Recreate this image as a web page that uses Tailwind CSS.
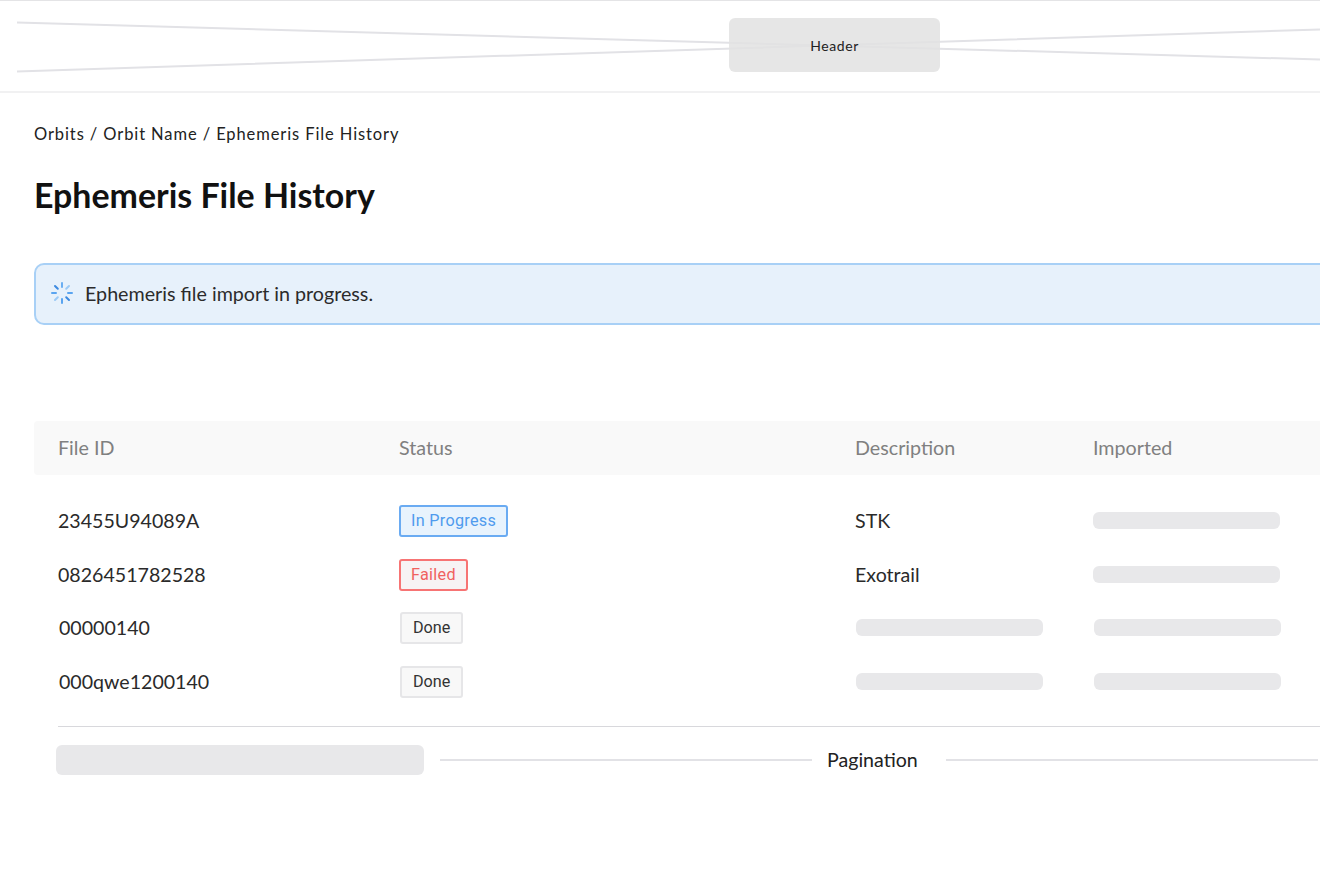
<!DOCTYPE html>
<html lang="en">

<head>
    <meta charset="UTF-8">
    <meta name="viewport" content="width=device-width, initial-scale=1.0">
    <title>Ephemeris File History</title>
    <script src="https://cdn.jsdelivr.net/npm/@tailwindcss/browser@4"></script>
</head>

<body class="bg-white overflow-hidden h-[880px] font-['Lato','Liberation_Sans',sans-serif] text-[#1a1a1a]">

    <!-- header placeholder -->
    <header class="relative h-[93px] border-t border-t-[#e4e4e6] border-b-2 border-b-[#f1f1f2] flex justify-center">
        <svg class="absolute inset-0" width="1320" height="92" viewBox="0 0 1320 92" fill="none">
            <path d="M17 21.5L1320 58.5M17 70.5L1320 28.5" stroke="#e2e2e6" stroke-width="2" />
        </svg>
        <div class="relative w-[211px] h-[54px] mt-[17px] ml-[349px] rounded-[6px] bg-[#e2e2e2]/85 flex items-center justify-center text-[14px] tracking-[0.6px] text-[#222]">Header</div>
    </header>

    <main class="pl-[34px] w-[1400px]">
        <div class="mt-[31px] text-[16.5px] leading-[20px] tracking-[0.9px] text-[#222]">Orbits / Orbit Name / Ephemeris File History</div>
        <h1 class="mt-[31px] text-[33.9px] leading-[40px] font-bold text-[#111]">Ephemeris File History</h1>

        <!-- alert -->
        <div class="mt-[48px] h-[62px] border-2 border-[#a8d0f6] rounded-[10px] bg-[#e7f1fb] flex items-center pl-[14px] gap-[11px] text-[19.7px] text-[#2b2b2b]">
            <svg class="-mt-[2px]" width="24" height="24" viewBox="0 0 24 24" fill="none" stroke-width="2" stroke-linecap="round">
                <path d="M12 2V6" stroke="#6aaef2" />
                <path d="M19 5L16.2 7.8" stroke="#9ccaf6" />
                <path d="M22 12H18" stroke="#5aa4f0" />
                <path d="M19 19L16.2 16.2" stroke="#3d8ae0" />
                <path d="M12 22V18" stroke="#5aa4f0" />
                <path d="M5 19L7.8 16.2" stroke="#9ccaf6" />
                <path d="M2 12H6" stroke="#5aa4f0" />
                <path d="M5 5L7.8 7.8" stroke="#3d8ae0" />
            </svg>
            <span>Ephemeris file import in progress.</span>
        </div>

        <!-- table -->
        <div class="mt-[96px]">
            <div class="h-[54px] pb-[1px] bg-[#f9f9f9] rounded-[4px] pl-[24px] grid grid-cols-[341px_456px_238px_1fr] items-center text-[19.7px] text-[#808080]">
                <div>File ID</div>
                <div>Status</div>
                <div>Description</div>
                <div>Imported</div>
            </div>

            <div class="pt-[19px] text-[19.6px] text-[#2a2a2a]">
                <div class="pl-[24px] h-[53.5px] grid grid-cols-[341px_456px_238px_187px] items-center">
                    <div>23455U94089A</div>
                    <div><span class="inline-block h-[32px] leading-[28px] px-[10px] border-2 border-[#6aabf2] rounded-[3px] bg-[#e8f3fd] text-[#4f9bee] text-[16.2px] font-['Roboto',sans-serif] tracking-[0.3px]">In Progress</span></div>
                    <div>STK</div>
                    <div class="h-[17px] rounded-[6px] bg-[#e8e8ea]"></div>
                </div>
                <div class="pl-[24px] h-[53.5px] grid grid-cols-[341px_456px_238px_187px] items-center">
                    <div>0826451782528</div>
                    <div><span class="inline-block h-[32px] leading-[28px] px-[10px] border-2 border-[#f77474] rounded-[3px] bg-[#f7f3f4] text-[#f0625f] text-[16.2px] font-['Roboto',sans-serif] tracking-[0.3px]">Failed</span></div>
                    <div>Exotrail</div>
                    <div class="h-[17px] rounded-[6px] bg-[#e8e8ea]"></div>
                </div>
                <div class="pl-[25px] h-[53.5px] grid grid-cols-[341px_456px_238px_187px] items-center">
                    <div>00000140</div>
                    <div><span class="inline-block h-[32px] leading-[28px] px-[11px] border-2 border-[#e6e6e8] rounded-[3px] bg-[#f8f8f8] text-[#333] text-[16.2px] font-['Roboto',sans-serif]">Done</span></div>
                    <div class="h-[17px] w-[187px] rounded-[6px] bg-[#e8e8ea]"></div>
                    <div class="h-[17px] rounded-[6px] bg-[#e8e8ea]"></div>
                </div>
                <div class="pl-[25px] h-[53.5px] grid grid-cols-[341px_456px_238px_187px] items-center">
                    <div>000qwe1200140</div>
                    <div><span class="inline-block h-[32px] leading-[28px] px-[11px] border-2 border-[#e6e6e8] rounded-[3px] bg-[#f8f8f8] text-[#333] text-[16.2px] font-['Roboto',sans-serif]">Done</span></div>
                    <div class="h-[17px] w-[187px] rounded-[6px] bg-[#e8e8ea]"></div>
                    <div class="h-[17px] rounded-[6px] bg-[#e8e8ea]"></div>
                </div>
            </div>

            <!-- pagination placeholder -->
            <div class="ml-[24px] mt-[18px] border-t border-[#d8d8dc] h-[1px]"></div>
            <div class="ml-[22px] mt-[18px] w-[1262px] h-[30px] flex items-center">
                <div class="w-[368px] h-[30px] rounded-[6px] bg-[#e8e8ea]"></div>
                <div class="ml-[16px] w-[372px] h-[2px] bg-[#e2e2e6]"></div>
                <div class="ml-[15px] w-[119px] text-[19.6px] text-[#222]">Pagination</div>
                <div class="w-[372px] h-[2px] bg-[#e2e2e6]"></div>
            </div>
        </div>
    </main>

</body>

</html>
